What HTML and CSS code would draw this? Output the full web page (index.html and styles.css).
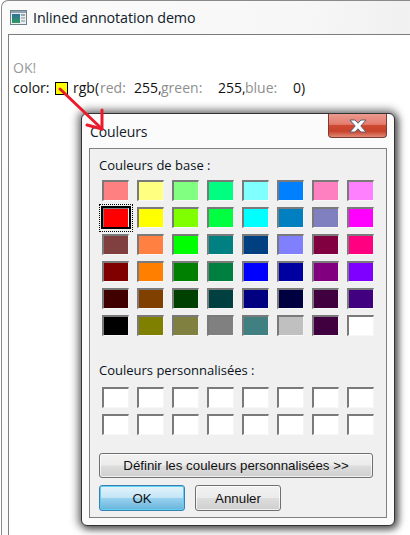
FILE: index.html
```html
<!DOCTYPE html>
<html lang="fr">
<head>
<meta charset="utf-8">
<title>Inlined annotation demo</title>
<link rel="stylesheet" href="styles.css">
</head>
<body>
<div class="window">
  <div class="titlebar">
    <svg class="appicon" width="17" height="15" viewBox="0 0 17 15">
      <rect x="0.5" y="0.5" width="16" height="14" fill="#e8eef2" stroke="#6f7f88"/>
      <rect x="1" y="1" width="15" height="2" fill="#8fa3b0"/>
      <defs><linearGradient id="pic" x1="0" y1="0" x2="0" y2="1"><stop offset="0" stop-color="#2f6f9a"/><stop offset="1" stop-color="#2f9a5c"/></linearGradient></defs>
      <rect x="2" y="4" width="8" height="9" fill="url(#pic)"/>
      <rect x="11" y="4" width="4" height="2" fill="#9aa5ac"/>
      <rect x="11" y="7" width="4" height="2" fill="#b5bdc2"/>
      <rect x="11" y="10" width="4" height="2" fill="#b5bdc2"/>
    </svg>
    <span class="wintitle">Inlined annotation demo</span>
  </div>
  <div class="client">
    <div class="ok">OK!</div>
    <div class="colorline">
      <span class="w-color">color:</span>
      <span class="chip"></span>
      <span class="w-rgb">rgb(</span>
      <span class="hint w-red">red:</span>
      <span class="w-num">255,</span>
      <span class="hint w-green">green:</span>
      <span class="w-num">255,</span>
      <span class="hint w-blue">blue:</span>
      <span>0)</span>
    </div>
  </div>
</div>

<div class="dialog">
  <div class="dlgtitle">
    <span class="dlgname">Couleurs</span>
    <div class="close">
      <svg width="20" height="14" viewBox="0 0 20 14">
        <path d="M2 1 H7 L10 4.2 L13 1 H18 L12.8 7 L18 13 H13 L10 9.8 L7 13 H2 L7.2 7 Z" fill="#fff" stroke="#5a5f78" stroke-width="1"/>
      </svg>
    </div>
  </div>
  <div class="panel">
    <div class="label first">Couleurs de base :</div>
    <div class="grid">
      <span class="sw" style="background:#ff8080"></span><span class="sw" style="background:#ffff80"></span><span class="sw" style="background:#80ff80"></span><span class="sw" style="background:#00ff80"></span><span class="sw" style="background:#80ffff"></span><span class="sw" style="background:#0080ff"></span><span class="sw" style="background:#ff80c0"></span><span class="sw" style="background:#ff80ff"></span>
      <span class="sw sel" style="background:#ff0000"></span><span class="sw" style="background:#ffff00"></span><span class="sw" style="background:#80ff00"></span><span class="sw" style="background:#00ff40"></span><span class="sw" style="background:#00ffff"></span><span class="sw" style="background:#0080c0"></span><span class="sw" style="background:#8080c0"></span><span class="sw" style="background:#ff00ff"></span>
      <span class="sw" style="background:#804040"></span><span class="sw" style="background:#ff8040"></span><span class="sw" style="background:#00ff00"></span><span class="sw" style="background:#008080"></span><span class="sw" style="background:#004080"></span><span class="sw" style="background:#8080ff"></span><span class="sw" style="background:#800040"></span><span class="sw" style="background:#ff0080"></span>
      <span class="sw" style="background:#800000"></span><span class="sw" style="background:#ff8000"></span><span class="sw" style="background:#008000"></span><span class="sw" style="background:#008040"></span><span class="sw" style="background:#0000ff"></span><span class="sw" style="background:#0000a0"></span><span class="sw" style="background:#800080"></span><span class="sw" style="background:#8000ff"></span>
      <span class="sw" style="background:#400000"></span><span class="sw" style="background:#804000"></span><span class="sw" style="background:#004000"></span><span class="sw" style="background:#004040"></span><span class="sw" style="background:#000080"></span><span class="sw" style="background:#000040"></span><span class="sw" style="background:#400040"></span><span class="sw" style="background:#400080"></span>
      <span class="sw" style="background:#000000"></span><span class="sw" style="background:#808000"></span><span class="sw" style="background:#808040"></span><span class="sw" style="background:#808080"></span><span class="sw" style="background:#408080"></span><span class="sw" style="background:#c0c0c0"></span><span class="sw" style="background:#400040"></span><span class="sw" style="background:#ffffff"></span>
    </div>
    <div class="label second">Couleurs personnalisées :</div>
    <div class="grid custom">
      <span class="sw"></span><span class="sw"></span><span class="sw"></span><span class="sw"></span><span class="sw"></span><span class="sw"></span><span class="sw"></span><span class="sw"></span>
      <span class="sw"></span><span class="sw"></span><span class="sw"></span><span class="sw"></span><span class="sw"></span><span class="sw"></span><span class="sw"></span><span class="sw"></span>
    </div>
    <button class="btn define">Définir les couleurs personnalisées &gt;&gt;</button>
    <div class="actions">
      <button class="btn action default">OK</button>
      <button class="btn action">Annuler</button>
    </div>
  </div>
</div>

<svg class="arrow" width="410" height="535" viewBox="0 0 410 535">
  <g fill="none" stroke="#ea1c2c" stroke-width="3" stroke-linecap="round">
    <path d="M60 89 L101 128"/>
    <path d="M102 110 L102 129"/>
    <path d="M87 125 L102 129"/>
  </g>
</svg>
</body>
</html>
```
FILE: styles.css
```css
* { box-sizing: border-box; }
html, body { margin: 0; padding: 0; }
body {
  width: 410px;
  height: 535px;
  overflow: hidden;
  background: #fff;
  font-family: "Open Sans", "Liberation Sans", sans-serif;
  position: relative;
}
.window {
  width: 409px;
  height: 535px;
  margin-left: 1px;
  padding: 0 0 0 6px;
  border: 1px solid #8a8a8a;
  border-right: none;
  border-bottom: none;
  border-radius: 7px 0 0 0;
  background: linear-gradient(100deg, #fbfbfb 0%, #f7f7f7 60%, #f1f1f1 80%, #f8f8f8 100%);
  display: flex;
  flex-direction: column;
}
.titlebar {
  height: 33px;
  display: flex;
  align-items: center;
  flex: none;
  padding: 0 0 0 2px;
}
.appicon { flex: none; margin-right: 6px; }
.wintitle {
  font-size: 14.3px;
  color: #10202c;
  letter-spacing: -0.1px;
}
.client {
  flex: 1;
  background: #fff;
  border-top: 1px solid #7d7d7d;
  border-left: 1px solid #7d7d7d;
  padding: 23px 0 0 4px;
  font-size: 14px;
  line-height: 20px;
  color: #111;
}
.ok { color: #9a9a9a; }
.colorline { display: flex; align-items: center; }
.colorline span { flex: none; }
.w-color { width: 42px; }
.chip {
  width: 13px;
  height: 13px;
  border: 1px solid #000;
  background: #ffff00;
  margin-right: 5px;
}
.w-rgb { width: 27px; }
.hint { color: #8e8e8e; }
.w-red { width: 34px; }
.w-num { width: 27px; }
.w-green { width: 57px; }
.w-blue { width: 48px; }

.dialog {
  position: absolute;
  left: 81px;
  top: 113px;
  width: 314px;
  height: 413px;
  padding: 0 7px 7px;
  border: 1px solid #333;
  border-radius: 6px;
  background: #fbfbfb;
  box-shadow: 0 0 9px 3px rgba(0,0,0,.55), 3px 3px 6px rgba(0,0,0,.35);
  display: flex;
  flex-direction: column;
}
.dlgtitle {
  height: 34px;
  flex: none;
  display: flex;
  justify-content: space-between;
  align-items: flex-start;
}
.dlgname {
  font-size: 14px;
  color: #10202c;
  margin: 8px 0 0 1px;
  letter-spacing: -0.1px;
}
.close {
  width: 59px;
  height: 24px;
  border: 1px solid #7a3b36;
  border-top: none;
  border-radius: 0 0 4px 4px;
  background: linear-gradient(#eb9a8e 0%, #e37c6e 45%, #cf4a30 50%, #c8432c 75%, #e08a76 100%);
  display: flex;
  align-items: center;
  justify-content: center;
}
.close svg { display: block; }
.panel {
  flex: 1;
  background: #f0f0f0;
  border: 1px solid #808080;
  padding: 0 0 0 9px;
  display: flex;
  flex-direction: column;
}
.label {
  font-size: 13px;
  line-height: 16px;
  color: #0a1220;
}
.first { margin-top: 8px; }
.second { margin-top: 26px; }
.grid {
  display: grid;
  grid-template-columns: repeat(8, 27px);
  grid-auto-rows: 21px;
  column-gap: 8px;
  row-gap: 6px;
  margin: 7px 0 0 3px;
}
.custom { margin-top: 9px; }
.sw {
  position: relative;
  display: block;
  background: #fff;
  border-style: solid;
  border-width: 2px 1px 1px 2px;
  border-color: #7a7a7a #f4f4f4 #f8f8f8 #7a7a7a;
}
.sel::before {
  content: "";
  position: absolute;
  inset: -3px -3px -2px -3px;
  border: 2px solid #000;
}
.sel::after {
  content: "";
  position: absolute;
  inset: -5px;
  border: 1px dotted #000;
}
.btn {
  font-family: "Liberation Sans", sans-serif;
  font-size: 13.3px;
  color: #111;
  padding: 0;
  border: 1px solid #707070;
  border-radius: 3px;
  background: linear-gradient(#f2f2f2 0%, #ebebeb 48%, #dddddd 52%, #cfcfcf 100%);
  box-shadow: inset 0 0 0 1px rgba(255,255,255,.7);
}
.define {
  width: 274px;
  height: 25px;
  margin-top: 18px;
  flex: none;
}
.actions {
  display: flex;
  gap: 10px;
  margin-top: 7px;
}
.action { width: 86px; height: 26px; }
.default {
  border-color: #3c7fb1;
  background: linear-gradient(#e5f4fc 0%, #c4e5f6 48%, #98d1ef 52%, #68b3db 100%);
  box-shadow: inset 0 0 0 1px #5ed0f2;
}
.arrow {
  position: absolute;
  left: 0;
  top: 0;
  pointer-events: none;
}
```
